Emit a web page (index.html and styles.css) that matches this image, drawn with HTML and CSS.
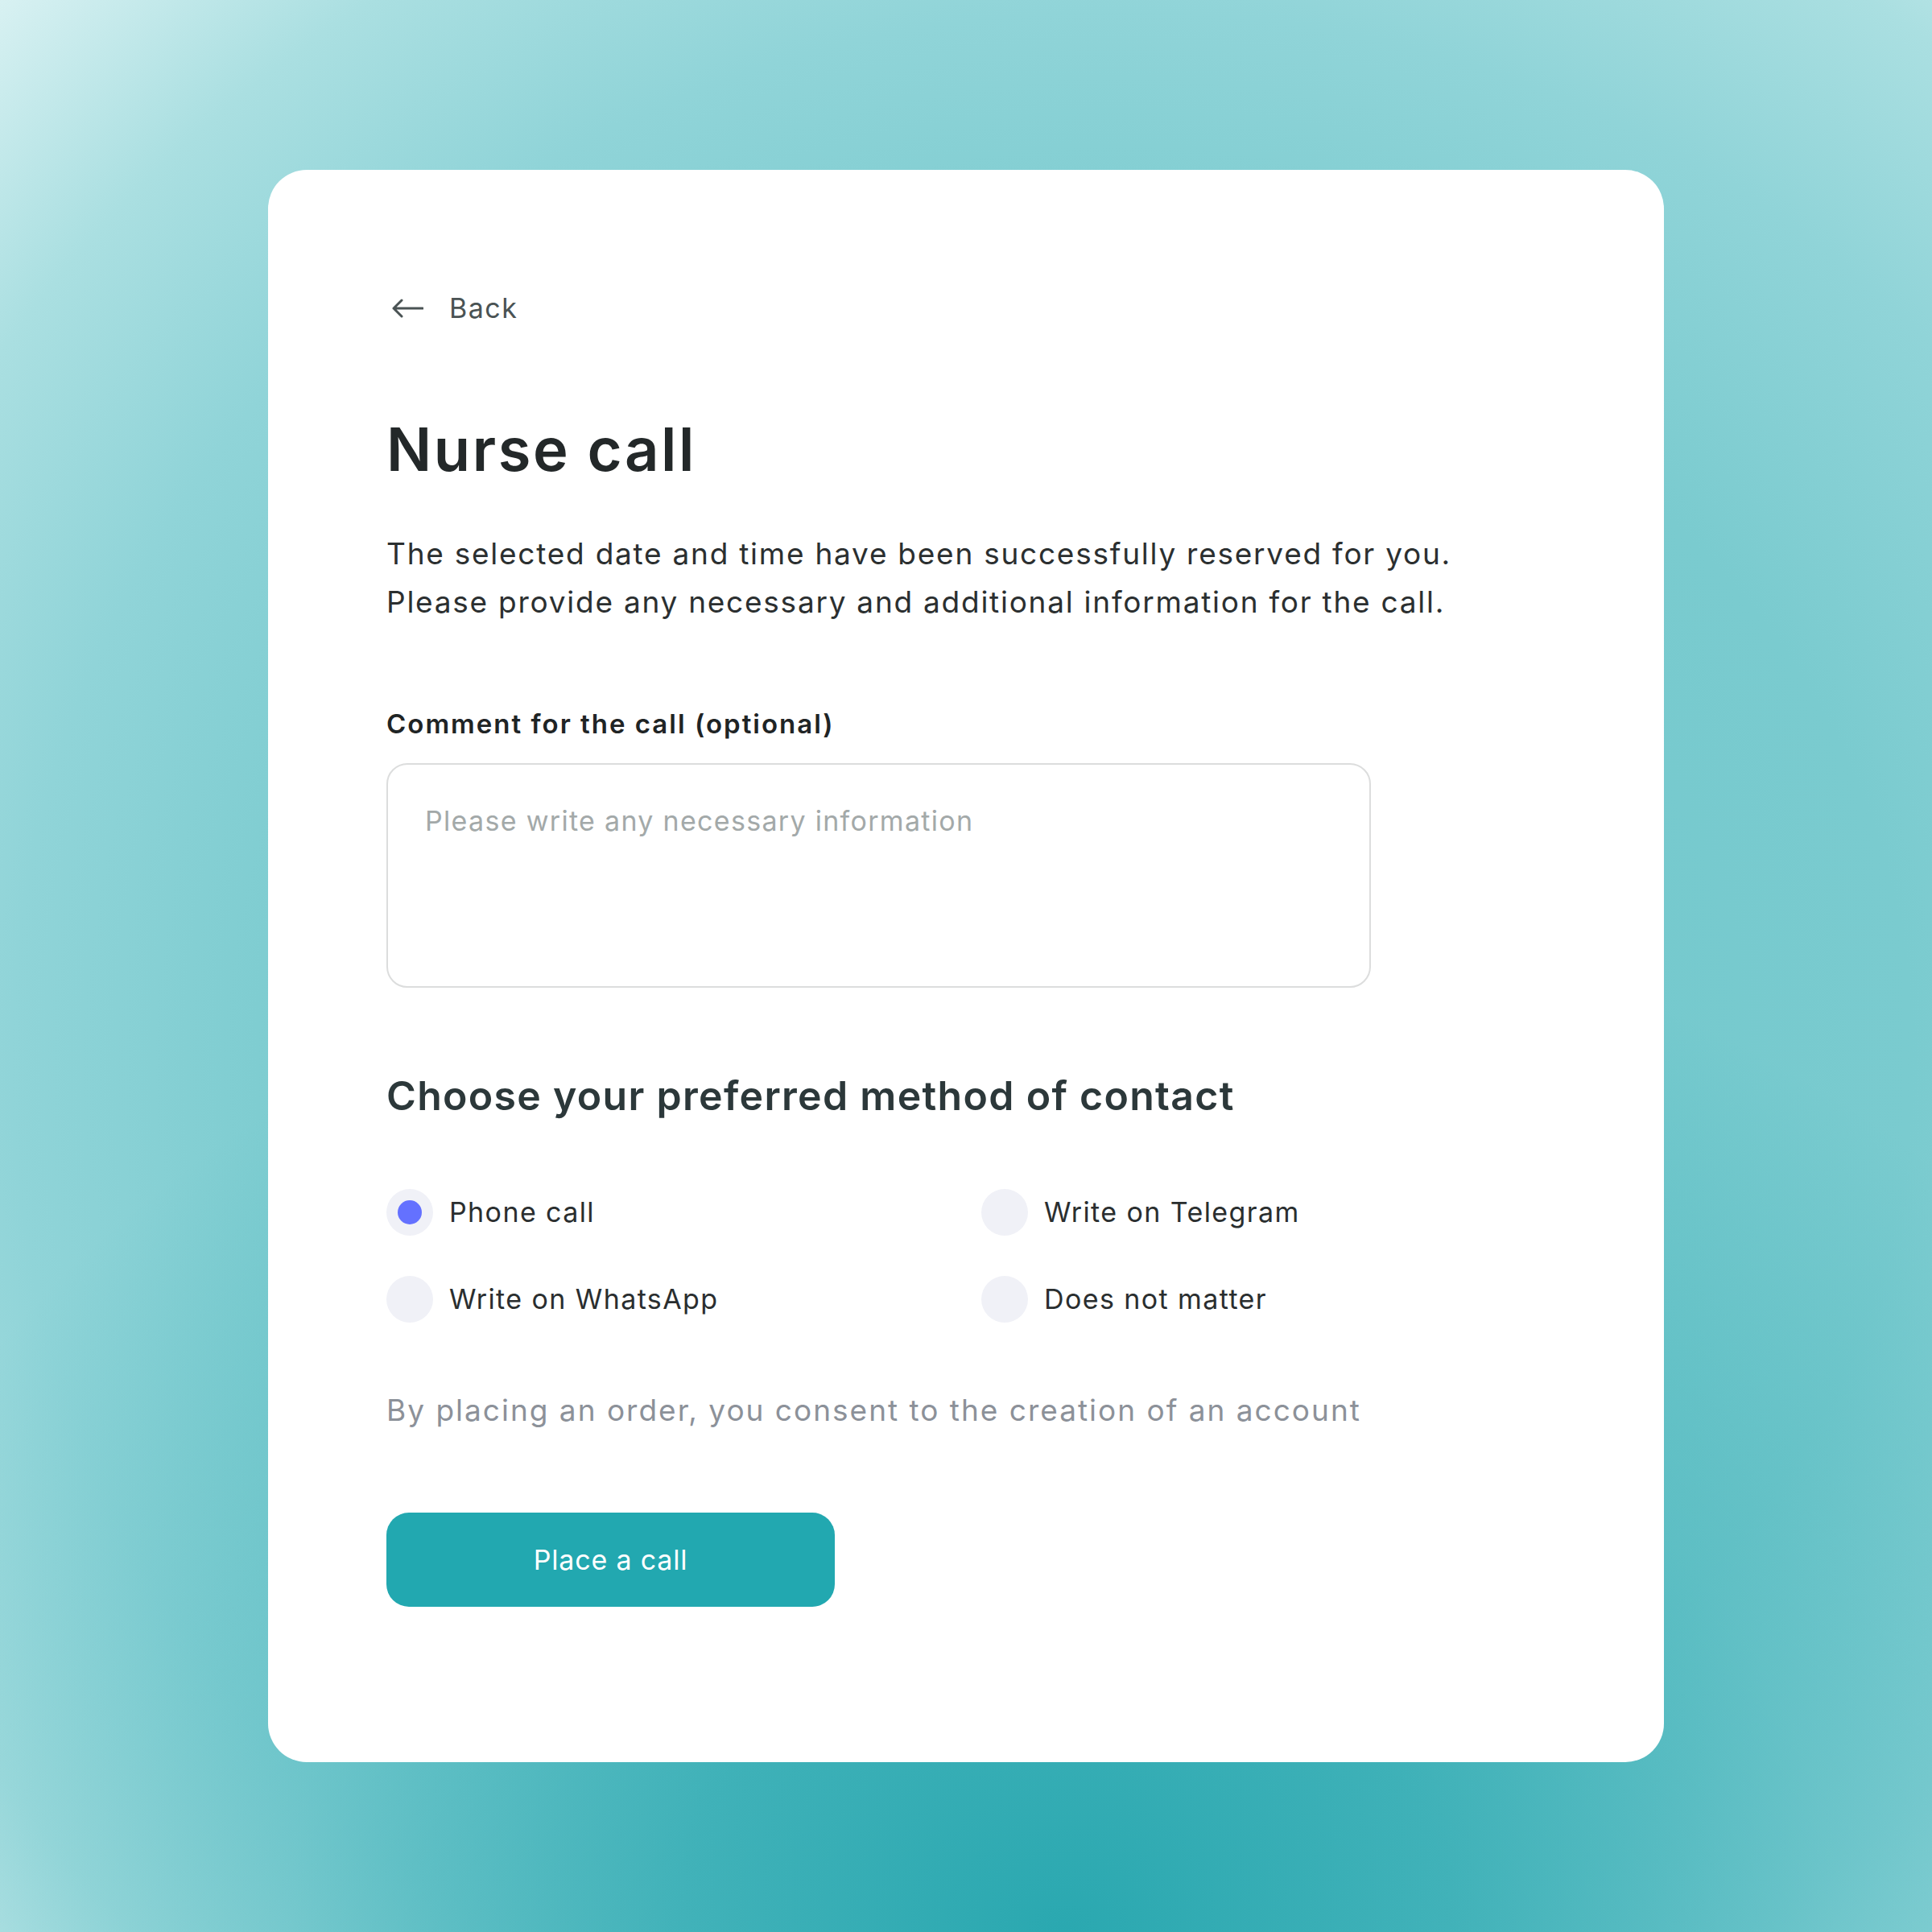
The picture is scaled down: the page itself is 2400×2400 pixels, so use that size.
FILE: index.html
```html
<!DOCTYPE html>
<html lang="en">
<head>
    <meta charset="UTF-8">
    <title>Nurse call</title>
    <link rel="stylesheet" href="styles.css">
</head>
<body>
    <div class="page">
        <div class="card">
            <a class="back-link" href="#">
                <svg class="back-icon" width="40" height="24" viewBox="0 0 40 24" fill="none">
                    <path d="M39 12H3M13 2L3 12l10 10" stroke="#4a5354" stroke-width="3" stroke-linecap="round" stroke-linejoin="round"/>
                </svg>
                <span>Back</span>
            </a>

            <h1>Nurse call</h1>
            <p class="intro">The selected date and time have been successfully reserved for you.<br>Please provide any necessary and additional information for the call.</p>

            <form class="call-form" onsubmit="return false">
                <label class="field-label" for="comment">Comment for the call (optional)</label>
                <textarea id="comment" class="comment-box" placeholder="Please write any necessary information"></textarea>

                <h2>Choose your preferred method of contact</h2>
                <div class="contact-options">
                    <label class="option">
                        <input type="radio" name="contact" value="phone" checked>
                        <span class="radio"></span>
                        <span class="option-text">Phone call</span>
                    </label>
                    <label class="option">
                        <input type="radio" name="contact" value="telegram">
                        <span class="radio"></span>
                        <span class="option-text">Write on Telegram</span>
                    </label>
                    <label class="option">
                        <input type="radio" name="contact" value="whatsapp">
                        <span class="radio"></span>
                        <span class="option-text">Write on WhatsApp</span>
                    </label>
                    <label class="option">
                        <input type="radio" name="contact" value="any">
                        <span class="radio"></span>
                        <span class="option-text">Does not matter</span>
                    </label>
                </div>

                <p class="consent">By placing an order, you consent to the creation of an account</p>

                <button class="submit-button" type="submit">Place a call</button>
            </form>
        </div>
    </div>
</body>
</html>
```

FILE: styles.css
```css
body {
    margin: 0;
    padding: 0;
    font-family: Inter, "Noto Sans", sans-serif;
    color: #2b2f30;
}

.page {
    width: 2400px;
    height: 2400px;
    display: flex;
    align-items: center;
    justify-content: center;
    background:
        radial-gradient(1600px 1300px at 55% 100%, rgba(42, 168, 176, 1) 0%, rgba(42, 168, 176, 0.75) 30%, rgba(42, 168, 176, 0.35) 60%, rgba(42, 168, 176, 0) 100%),
        radial-gradient(farthest-corner at 58% 55%, #6cc6cb 0%, #7acbcf 50%, #90d4d8 70%, #aadfe1 85%, #d8f1f2 100%);
}

.card {
    width: 1734px;
    height: 1978px;
    box-sizing: border-box;
    padding: 152px 147px 0;
    background-color: #ffffff;
    border-radius: 48px;
}

.back-link {
    display: inline-flex;
    align-items: center;
    gap: 32px;
    margin-left: 6px;
    font-size: 34px;
    line-height: 40px;
    letter-spacing: 1.5px;
    color: #4a5354;
    text-decoration: none;
}

h1 {
    margin: 115px 0 0;
    font-size: 74px;
    line-height: 80px;
    font-weight: 600;
    letter-spacing: 2.6px;
    color: #232829;
}

.intro {
    margin: 60px 0 0;
    font-size: 37px;
    line-height: 60px;
    letter-spacing: 1.75px;
    color: #2b2f30;
}

.call-form {
    display: flex;
    flex-direction: column;
    align-items: flex-start;
}

.field-label {
    margin-top: 101px;
    font-size: 33px;
    line-height: 40px;
    font-weight: 600;
    letter-spacing: 2px;
    color: #1f2425;
}

.comment-box {
    width: 1223px;
    height: 279px;
    margin-top: 29px;
    box-sizing: border-box;
    padding: 50px 46px;
    border: 2px solid #dcdddd;
    border-radius: 26px;
    font-family: inherit;
    font-size: 34px;
    line-height: 40px;
    letter-spacing: 1.3px;
    color: #2b2f30;
    resize: none;
    outline: none;
}

.comment-box::placeholder {
    color: #a3a9a9;
}

h2 {
    margin: 104px 0 0;
    font-size: 50px;
    line-height: 60px;
    font-weight: 600;
    letter-spacing: 1.3px;
    color: #2c383a;
}

.contact-options {
    display: grid;
    grid-template-columns: 739px auto;
    row-gap: 50px;
    margin-top: 86px;
}

.option {
    display: flex;
    align-items: center;
    gap: 20px;
    cursor: pointer;
}

.option input {
    display: none;
}

.radio {
    width: 58px;
    height: 58px;
    border-radius: 50%;
    background-color: #f0f1f7;
    display: flex;
    align-items: center;
    justify-content: center;
}

.option input:checked + .radio::after {
    content: "";
    width: 30px;
    height: 30px;
    border-radius: 50%;
    background-color: #6471ff;
}

.option-text {
    font-size: 34px;
    line-height: 40px;
    letter-spacing: 1.4px;
    color: #2a2e2f;
}

.consent {
    margin: 87px 0 0;
    font-size: 37px;
    line-height: 44px;
    letter-spacing: 2px;
    color: #8c9199;
}

.submit-button {
    width: 557px;
    height: 117px;
    margin-top: 105px;
    border: none;
    border-radius: 28px;
    background-color: #22a8b0;
    font-family: inherit;
    font-size: 34px;
    letter-spacing: 0.8px;
    color: #ffffff;
    cursor: pointer;
}
```
